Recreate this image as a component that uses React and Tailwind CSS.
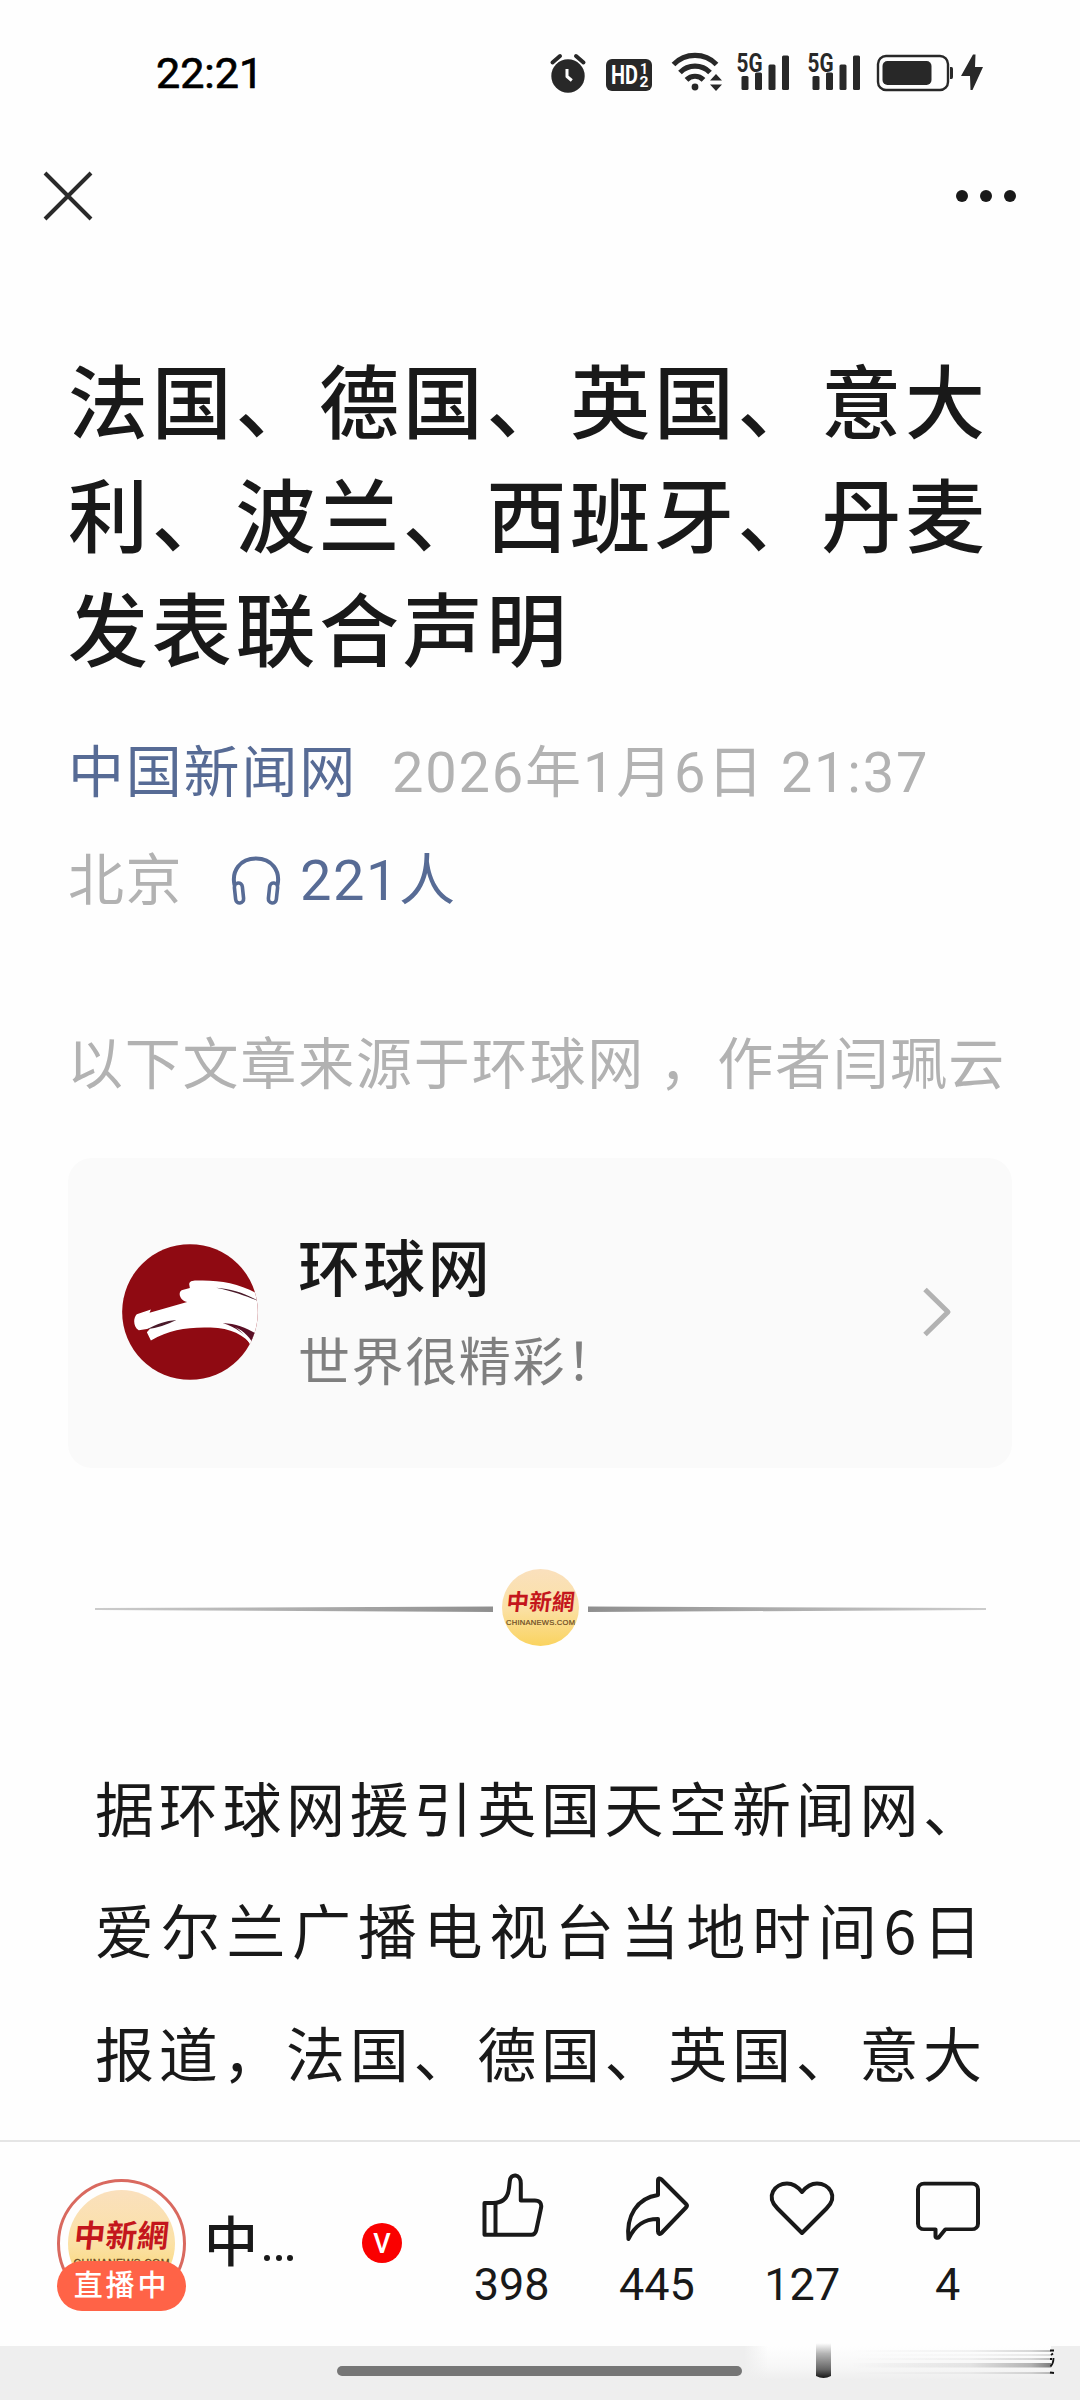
import React from 'react';

const INK = '#191919';

const AlarmIcon = () => (
  <svg width="50" height="50" viewBox="546 48 50 50" fill="none">
    <circle cx="568" cy="76" r="16.7" fill="#282828" />
    <path d="M552.5 62.5 560 56M583.5 62.5 576 56" stroke="#282828" strokeWidth="4" strokeLinecap="round" />
    <path d="M567 69v7.5l4.8 4" stroke="#fff" strokeWidth="3" strokeLinejoin="round" />
  </svg>
);

const HdIcon = () => (
  <svg width="66" height="50" viewBox="596 48 66 50" fill="#fff" fontWeight="700">
    <rect x="606" y="59" width="46" height="32" rx="6" fill="#282828" />
    <text x="611" y="84" fontSize="25" textLength="27" lengthAdjust="spacingAndGlyphs">HD</text>
    <text x="640" y="74" fontSize="15" textLength="8" lengthAdjust="spacingAndGlyphs">1</text>
    <text x="639.500" y="87" fontSize="15" textLength="9" lengthAdjust="spacingAndGlyphs">2</text>
  </svg>
);

const WifiIcon = () => (
  <svg width="68" height="50" viewBox="662 48 68 50" fill="none">
    <path d="M673.5 64.5a30 30 0 0 1 43 0M680 72.5a21 21 0 0 1 30 0M686.5 79.8a12 12 0 0 1 17 0" stroke="#282828" strokeWidth="5.2" />
    <circle cx="695" cy="87" r="3.4" fill="#282828" />
    <path d="M710 80.5h12l-6-6.5zM710 84.5h12l-6 6.5z" fill="#282828" />
  </svg>
);

const SignalIcon = () => (
  <svg width="71" height="50" viewBox="730 48 71 50" fill="#282828">
    <text x="736.5" y="71.5" fontSize="26" fontWeight="700" textLength="26" lengthAdjust="spacingAndGlyphs">5G</text>
    <rect x="741.5" y="76" width="7" height="14" rx="1.5" />
    <rect x="755" y="72.5" width="7" height="17.5" rx="1.5" />
    <rect x="768.5" y="64.5" width="7" height="25.5" rx="1.5" />
    <rect x="782" y="55.5" width="7" height="34.5" rx="1.5" />
  </svg>
);

const BatteryIcon = () => (
  <svg width="116" height="50" viewBox="872 48 116 50" fill="#282828">
    <rect x="878" y="56" width="70" height="34" rx="8" fill="none" stroke="#282828" strokeWidth="2.4" />
    <rect x="882.5" y="61" width="49" height="24" rx="5" />
    <path d="M950 67h1.5q1.5 0 1.5 2v8q0 2-1.5 2H950z" />
    <path d="M973 54.500 961 76H970L970.500 90h2L983 67H975L975.500 54.500z" />
  </svg>
);

const StatusBar = () => (
  <div className="flex h-[146px] items-start pt-12 pl-[156px] font-[Roboto]">
    <div className="w-[390px] text-[43px] leading-[50px] text-black [-webkit-text-stroke:0.700px_black]">22:21</div>
    <AlarmIcon />
    <HdIcon />
    <WifiIcon />
    <SignalIcon />
    <SignalIcon />
    <BatteryIcon />
  </div>
);

const TitleBar = () => (
  <div className="flex h-[100px] items-center justify-between pl-[42px] pr-[64px]">
    <svg width="52" height="52" viewBox="0 0 52 52" stroke="#2a2a2a" strokeWidth="4">
      <path d="M3 3 49 49M49 3 3 49" />
    </svg>
    <div className="flex gap-3">
      <span className="h-3 w-3 rounded-full bg-[#191919]" />
      <span className="h-3 w-3 rounded-full bg-[#191919]" />
      <span className="h-3 w-3 rounded-full bg-[#191919]" />
    </div>
  </div>
);

const Headphones = () => (
  <svg width="52" height="52" viewBox="0 0 52 52" fill="none" stroke="#576b95" strokeWidth="4" className="ml-[47px] mr-[18px]">
    <path d="M4.5 30C1.5 16 10 3.5 26 3.5S50.500 16 47.500 30" />
    <rect x="5" y="28" width="8" height="20" rx="4" transform="rotate(-6 9 38)" strokeWidth="3.600" />
    <rect x="39" y="28" width="8" height="20" rx="4" transform="rotate(6 43 38)" strokeWidth="3.600" />
  </svg>
);

const HuanqiuLogo = () => (
  <svg width="136" height="136" viewBox="36 41 405 405">
    <defs>
      <clipPath id="hq"><circle cx="238.500" cy="243.500" r="202" /></clipPath>
    </defs>
    <circle cx="238.500" cy="243.500" r="202" fill="#8f0a12" />
    <g clipPath="url(#hq)">
      <path d="M236 160C238 150 250 150 262 150C330 148 390 160 450 195V350L424 345C400 312 360 292 300 290C230 288 180 296 122 328L110 304L120 293L86 298C70 290 68 262 80 250L122 236L118 246L230 214C205 208 202 182 216 178L238 172Z" fill="#fff" />
      <path d="M316 171C360 174 400 186 445 212C410 198 370 182 316 171ZM110 295C140 278 165 270 198 267C170 282 140 290 110 295Z" fill="#4a1a2a" />
      <path d="M336 276C375 278 405 290 436 308L428 345C405 308 375 290 336 276Z" fill="#5a0f25" />
      <path d="M372 288C400 300 420 322 430 345L418 342C408 322 394 302 372 288Z" fill="#fff" />
    </g>
  </svg>
);

// gold round badge of the news agency
const NewsBadge = ({ size, id }) => (
  <svg width={size} height={size} viewBox="0 0 77 77">
    <defs>
      <linearGradient id={id} x1="0" y1="0" x2="0" y2="1">
        <stop offset="0" stopColor="#fae0bd" />
        <stop offset="0.5" stopColor="#fbe1a6" />
        <stop offset="1" stopColor="#fad35f" />
      </linearGradient>
    </defs>
    <circle cx="38.500" cy="38.500" r="38.500" fill={`url(#${id})`} />
    <text x="4" y="41" fontSize="22.500" fontWeight="700" fill="#c4161c" textLength="68" className="font-['Liberation_Serif','Noto_Sans_CJK_TC',serif]" transform="skewX(-6) translate(4 0)">中新網</text>
    <text x="4" y="55.500" fontSize="7.600" fill="#6b4a1e" stroke="#6b4a1e" strokeWidth="0.200" textLength="69" className="font-['Liberation_Sans',sans-serif]">CHINANEWS.COM</text>
  </svg>
);

const Divider = () => (
  <div className="mt-[101px] flex items-center justify-between pl-[95px] pr-[94px]">
    <svg width="398" height="8" viewBox="0 0 398 8" className="mt-[3px]">
      <defs>
        <linearGradient id="dl"><stop offset="0" stopColor="#ccc" /><stop offset="1" stopColor="#8f8f8f" /></linearGradient>
      </defs>
      <path d="M0 3 398 1.500v5.500L0 5z" fill="url(#dl)" />
    </svg>
    <NewsBadge size={77} id="gold1" />
    <svg width="398" height="8" viewBox="0 0 398 8" className="mt-[3px]">
      <defs>
        <linearGradient id="dr"><stop offset="0" stopColor="#8f8f8f" /><stop offset="1" stopColor="#ccc" /></linearGradient>
      </defs>
      <path d="M398 3 0 1.500v5.500l398-2z" fill="url(#dr)" />
    </svg>
  </div>
);

const SourceCard = () => (
  <div className="mx-[68px] mt-[48px] flex h-[310px] items-center rounded-[24px] bg-[#fafafa] pb-[3px] pl-[54px] pr-[60px]">
    <HuanqiuLogo />
    <div className="ml-[40px] flex-1">
      <div className="text-[62px] leading-[94px] tracking-[2.9px] font-medium text-[#191919]">环球网</div>
      <div className="text-[52px] leading-[94px] tracking-[1.6px] text-[#7f7f7f]">世界很精彩！</div>
    </div>
    <svg width="30" height="50" viewBox="0 0 30 50" fill="none" stroke="#b2b2b2" strokeWidth="5" strokeLinejoin="round">
      <path d="M3 2.500 26 25 3 47.500" />
    </svg>
  </div>
);

const actions = [
  {
    count: '398',
    icon: (
      <path d="M11.500 40.500h8.500c10 0 15-5 16-15l.800-7c.800-8 11-7.500 11 2.500V38h14c5 0 7 3 6.300 7l-4.800 22.500c-.800 3.500-2.500 4.800-5 4.800H11.500zM22.500 40.500v31.500" transform="translate(1 -3.500)" />
    ),
  },
  {
    count: '445',
    icon: <path d="M41 14.500c0-2.500 2-2.500 3.500-1L69 38c1 1 1 2.500 0 3.500L44.500 67c-1.500 1.500-3.500 1-3.500-1.500V53c-14 0-23 6-29.500 20C9 50 20 32 41 29z" />,
  },
  {
    count: '127',
    icon: <path d="M40 67 15.500 42.500C3 30 13 17.500 25 17.500c6 0 11 3.500 15 8.500 4-5 9-8.500 15-8.500 12 0 22 12.500 9.500 25z" />,
  },
  {
    count: '4',
    icon: <path d="M16 19h48a6 6 0 0 1 6 6v37a6 6 0 0 1-6 6H37.500l-6.500 8.500c-1 1.500-3.500 1-3.500-1V68H16a6 6 0 0 1-6-6V25a6 6 0 0 1 6-6z" transform="translate(0 0) scale(1 .93)" />,
  },
];

const BottomBar = () => (
  <div className="flex h-[206px] border-t-2 border-[#e5e5e5] bg-[#fefefe] pl-[57px]">
    <div className="relative mt-[37px] flex h-[132px] w-[129px] justify-center">
      <div className="flex h-[129px] w-[129px] items-center justify-center rounded-full border-3 border-[#d9695f]">
        <NewsBadge size={107} id="gold2" />
      </div>
      <div className="absolute inset-x-0 bottom-0 h-[50px] rounded-full bg-[#ff6347] text-center text-[29px] leading-[45px] tracking-[2.800px] font-medium text-white">直播中</div>
    </div>
    <div className="ml-[18px] mt-[57px] flex w-[158px] text-[54px] leading-[80px] font-medium text-[#191919]">
      中
      <span className="ml-[6px] mt-[56px] flex gap-[5.500px]">
        <i className="h-[6px] w-[6px] rounded-full bg-[#191919]" />
        <i className="h-[6px] w-[6px] rounded-full bg-[#191919]" />
        <i className="h-[6px] w-[6px] rounded-full bg-[#191919]" />
      </span>
    </div>
    <div className="mt-[81px] h-10 w-10 rounded-full bg-[#fa0000] text-center font-[Roboto] text-[27px] leading-[42px] font-medium text-white">V</div>
    <div className="ml-[37px] mt-[24px] flex">
      {actions.map((a) => (
        <div key={a.count} className="flex w-[145.300px] flex-col items-center font-[Roboto] text-[45px] leading-[60px] text-[#191919]">
          <svg width="80" height="80" viewBox="0 0 80 80" fill="none" stroke={INK} strokeWidth="4" strokeLinejoin="round">{a.icon}</svg>
          <span className="mt-[9px]">{a.count}</span>
        </div>
      ))}
    </div>
  </div>
);

const streaks = [
  { y: 20, h: 2, o: 0.3 },
  { y: 24, h: 2, o: 0.15 },
  { y: 28, h: 2, o: 0.28 },
  { y: 33, h: 4.5, o: 0.55 },
  { y: 42, h: 2, o: 0.28 },
];

const NavBar = () => (
  <div className="relative h-[54px] bg-[#eee]">
    <div className="ml-[337px] pt-5"><div className="h-[10px] w-[405px] rounded-full bg-[#767676]" /></div>
    <svg width="340" height="70" viewBox="0 0 340 70" className="absolute right-0 bottom-0">
      <defs>
        <linearGradient id="haze" x1="0" y1="0" x2="0" y2="1">
          <stop offset="0" stopColor="#fefefe" />
          <stop offset="0.600" stopColor="#f7f7f7" />
          <stop offset="1" stopColor="#eee" />
        </linearGradient>
        <linearGradient id="hazeEdge"><stop offset="0" stopColor="#eee" /><stop offset="1" stopColor="#eee" stopOpacity="0" /></linearGradient>
        <linearGradient id="bar" x1="0" y1="0" x2="0" y2="1">
          <stop offset="0" stopColor="#fff" />
          <stop offset="0.300" stopColor="#b4b4b4" />
          <stop offset="0.750" stopColor="#666" />
          <stop offset="1" stopColor="#161616" />
        </linearGradient>
        <linearGradient id="streak">
          <stop offset="0" stopColor="#000" stopOpacity="0" />
          <stop offset="0.600" stopColor="#000" stopOpacity="0.150" />
          <stop offset="0.900" stopColor="#000" stopOpacity="0.500" />
          <stop offset="1" stopColor="#000" stopOpacity="0.900" />
        </linearGradient>
      </defs>
      <rect x="4" y="16" width="307" height="34" fill="url(#haze)" />
      <rect x="4" y="16" width="24" height="34" fill="url(#hazeEdge)" />
      <path d="M76 13h15v33q-7.500 4-15 0z" fill="url(#bar)" />
      {streaks.map((s) => (
        <rect key={s.y} x="110" y={s.y} width="201" height={s.h} fill="url(#streak)" opacity={s.o} />
      ))}
      <path d="M310 20.500h4M311 25l2-1.500M310 29h2M313.500 28c0 4-.500 6-3 8.500M310 42.500l4 .500" stroke="#111" strokeWidth="1.800" fill="none" />
    </svg>
  </div>
);

export default function App() {
  return (
    <div className="flex h-[2400px] w-[1080px] flex-col overflow-hidden bg-[#fefefe] font-['Noto_Sans_CJK_SC',sans-serif]" lang="zh-CN">
      <StatusBar />
      <TitleBar />

      <h1 className="mt-[94px] pl-[68px] text-[80px] leading-[114px] tracking-[3.700px] font-medium whitespace-nowrap text-[#191919]">
        法国、德国、英国、意大<br />利、波兰、西班牙、丹麦<br />发表联合声明
      </h1>

      <div className="mt-[37px] flex h-[108px] items-center pl-[68px] font-[Roboto,'Noto_Sans_CJK_SC',sans-serif] text-[56px] tracking-[1.800px] whitespace-nowrap">
        <span className="text-[#576b95]">中国新闻网</span>
        <span className="ml-[35px] text-[#b2b2b2]">2026年1月6日 21:37</span>
      </div>
      <div className="flex h-[108px] items-center pl-[68px] font-[Roboto,'Noto_Sans_CJK_SC',sans-serif] text-[56px] tracking-[1.500px] text-[#b2b2b2]">
        北京
        <Headphones />
        <span className="text-[#576b95]">221人</span>
      </div>

      <div className="mt-[75px] pl-[67px] text-[56px] leading-[100px] tracking-[1.800px] whitespace-nowrap text-[#b2b2b2]">以下文章来源于环球网 ，作者闫珮云</div>

      <SourceCard />
      <Divider />

      <div className="mt-[100px] h-[394px] overflow-hidden pl-[95px] text-[59px] leading-[122.300px] whitespace-nowrap text-[#191919]">
        <div className="tracking-[4.700px]">据环球网援引英国天空新闻网、</div>
        <div className="tracking-[6.700px]">爱尔兰广播电视台当地时间6日</div>
        <div className="tracking-[4.700px]">报道，法国、德国、英国、意大</div>
      </div>

      <BottomBar />
      <NavBar />
    </div>
  );
}
